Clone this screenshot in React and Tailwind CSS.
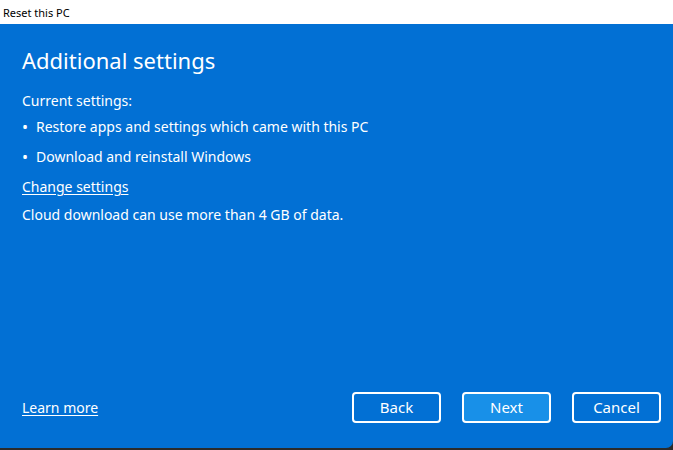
import React from 'react';

const font = { fontFamily: '"Segoe UI", "Noto Sans", "Open Sans", sans-serif' };

const DialogButton = ({ label, primary }) => (
  <button
    className={`w-[89px] h-[31px] rounded-[4px] border-2 border-white text-white text-[15px] flex items-center justify-center ${
      primary ? 'bg-[#1890e8]' : 'bg-[#0270d4]'
    }`}
  >
    {label}
  </button>
);

export default function App() {
  return (
    <div className="w-[673px] h-[450px] bg-[#2b2b2b] flex flex-col overflow-hidden" style={font}>
      {/* Title bar */}
      <div className="h-[24px] bg-white flex items-center px-[3px]">
        <span className="text-[11px] text-black leading-none">Reset this PC</span>
      </div>

      {/* Content */}
      <div className="h-[424px] bg-[#0270d4] rounded-br-[7px] flex flex-col px-[22px] text-white">
        <h1 className="text-[22px] leading-none mt-[25px]">Additional settings</h1>

        <div className="mt-[23px] text-[14px] leading-none">
          <p>Current settings:</p>
          <ul className="mt-[11px] flex flex-col gap-[14px]">
            <li className="flex items-center">
              <span className="w-[14px] text-[16px] leading-none">•</span>
              Restore apps and settings which came with this PC
            </li>
            <li className="flex items-center">
              <span className="w-[14px] text-[16px] leading-none">•</span>
              Download and reinstall Windows
            </li>
          </ul>
          <a className="block mt-[15px] underline underline-offset-2 w-fit">Change settings</a>
          <p className="mt-[14px]">Cloud download can use more than 4 GB of data.</p>
        </div>

        <div className="mt-auto mb-[25px] flex items-center justify-between mr-[-10px]">
          <a className="text-[14px] underline underline-offset-2">Learn more</a>
          <div className="flex gap-[21px]">
            <DialogButton label="Back" />
            <DialogButton label="Next" primary />
            <DialogButton label="Cancel" />
          </div>
        </div>
      </div>
    </div>
  );
}
